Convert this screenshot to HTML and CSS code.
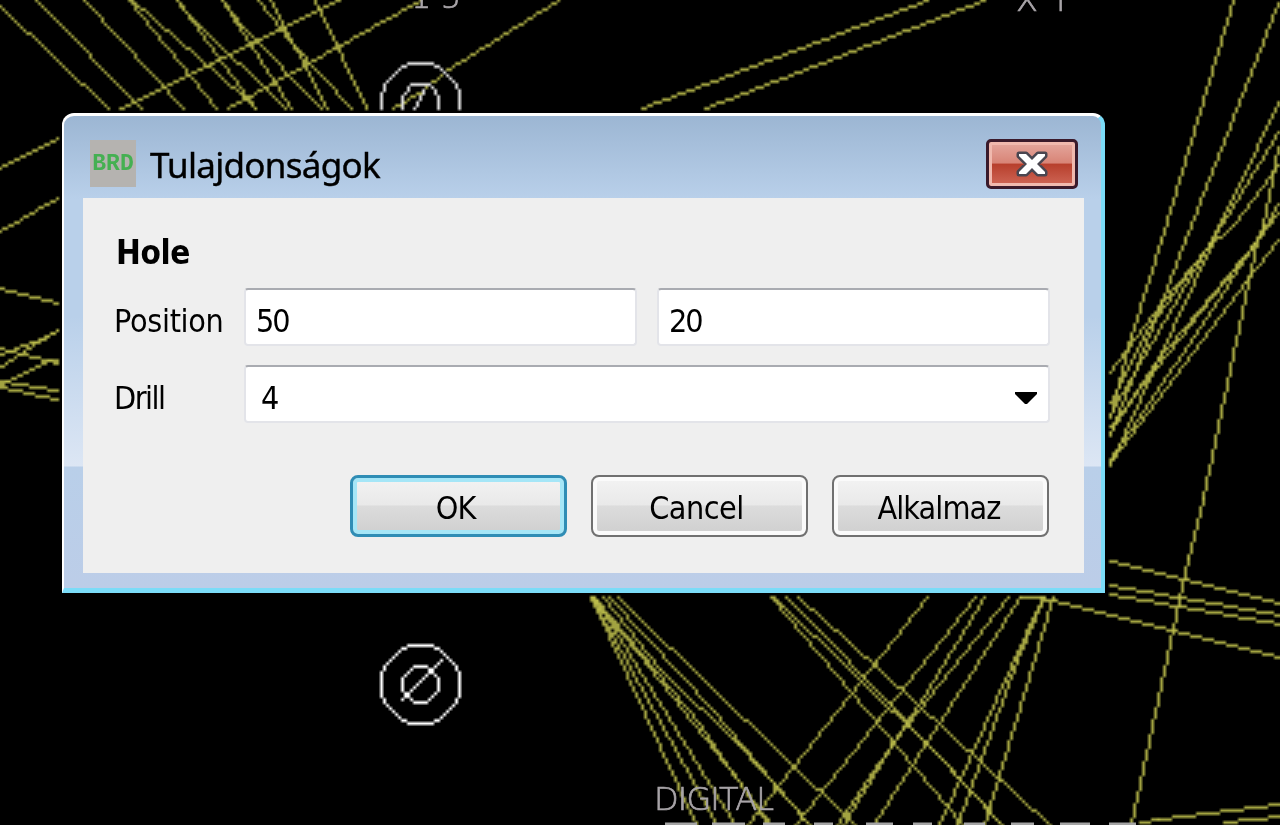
FILE: index.html
```html
<!DOCTYPE html>
<html lang="hu">
<head>
  <meta charset="UTF-8" />
  <meta name="viewport" content="width=device-width, initial-scale=1.0"/>
  <title>Tulajdonságok</title>
  <link rel="stylesheet" href="styles.css">
</head>
<body>
  <!-- board: airwires and holes on the canvas, silk labels above -->
  <canvas class="board" id="board" width="428" height="276"></canvas>
  <svg class="labels" width="1280" height="825" viewBox="0 0 1280 825">
    <path class="pads" d="M665 824H697M712 824H745M763 824H785M814 824H833M866 824H893M913 824H932M964 824H985M1011 824H1034M1060 824H1090M1109 824H1136"/>
    <text class="silk" x="654" y="810" textLength="120">DIGITAL</text>
    <text class="silk" x="411" y="8" textLength="50">15</text>
    <text class="silk" x="1016" y="11">X</text>
    <text class="silk" x="1056" y="11">I</text>
  </svg>

  <form class="dialog">
    <div class="titlebar">
      <span class="app-icon">BRD</span>
      <span class="title">Tulajdonságok</span>
      <button type="button" class="close">
        <svg width="34" height="28" viewBox="0 0 34 28">
          <path class="x-edge" d="M4 4H11L17 10L23 4H30V6L22 14L30 22V24H23L17 18L11 24H4V22L12 14L4 6Z"/>
          <path class="x-fill" d="M4 4H11L17 10L23 4H30V6L22 14L30 22V24H23L17 18L11 24H4V22L12 14L4 6Z"/>
        </svg>
      </button>
    </div>
    <div class="content">
      <h2>Hole</h2>
      <div class="row">
        <span class="label pos">Position</span>
        <span class="field">50</span>
        <span class="field">20</span>
      </div>
      <div class="row">
        <span class="label drill">Drill</span>
        <span class="field combo"><span class="value">4</span>
          <svg width="22" height="13" viewBox="0 0 22 13"><path d="M0 0H22V2L12 12H10L0 2Z"/></svg>
        </span>
      </div>
      <div class="buttons">
        <button type="button" class="btn default">OK</button>
        <button type="button" class="btn">Cancel</button>
        <button type="button" class="btn alk">Alkalmaz</button>
      </div>
    </div>
  </form>

  <script>
    const ctx = document.getElementById('board').getContext('2d');

    // polylines, x y pairs in page pixels
    const wires = [
      // top left
      '0 6 109 109', '38 0 141 109', '86 0 183 109', '131 0 217 109',
      '133 0 245 97 256 109', '177 0 257 109', '177 0 190 16 285 109',
      '222 0 291 109', '222 0 240 25 323 109', '260 0 293 42 353 109',
      '271 0 329 109', '316 0 367 109', '120 109 341 0', '228 109 422 0',
      '395 109 424 91 445 74 558 0', '643 109 928 0', '705 109 985 0',
      // left
      '0 168 58 139', '0 233 58 200', '0 289 58 305', '0 350 58 363',
      '0 356 35 343 58 330', '0 367 8 365 25 351 58 330',
      '0 385 50 362 58 360', '0 382 58 391', '0 389 58 399',
      // right
      '1235 0 1163 240 1133 338 1110 418', '1280 5 1187 240 1161 305 1110 437',
      '1280 103 1233 200 1207 250 1161 303 1110 373',
      '1280 133 1214 240 1150 328 1110 402',
      '1280 165 1233 225 1207 250 1110 415', '1212 243 1155 367 1110 467',
      '1280 206 1258 240 1157 363 1110 434', '1280 214 1258 240 1110 427',
      '1280 241 1245 284 1110 463', '1258 240 1195 336 1110 460',
      '1280 148 1263 225 1258 240 1203 500 1189 560 1132 827',
      // bottom
      '592 598 697 827', '592 598 718 827', '594 598 737 827',
      '592 598 640 655 727 767 772 827', '596 598 700 724 768 827',
      '603 598 660 670 740 745 811 827', '610 598 714 713 757 762 811 827',
      '618 598 635 612 857 827', '771 598 963 827',
      '776 598 934 752 1003 827', '788 598 820 631 936 753 1003 827',
      '800 598 850 643 1050 827', '928 598 749 827', '976 598 797 827',
      '985 598 924 697 838 827', '1009 598 894 743 845 827',
      '1021 598 874 827', '1042 600 940 827', '1045 598 1019 660 958 827',
      '1053 598 985 827',
      // bottom right
      '1022 598 1041 599 1282 658', '1110 562 1282 604',
      '1110 585 1282 617', '1110 594 1282 625',
      '1140 824 1158 821 1282 805', '1225 822 1282 816'
    ];
    const topHole = [
      '381 109 381 96 384 84 402 67 410 64 430 64 438 67 456 84 459 96 459 109',
      '402 109 402 97 413 85 430 85 438 97 438 109', '414 109 424 92'
    ];
    const hole = [
      '411 645 429 645 438 648 456 666 459 675 459 693 456 702 438 720 429 723 411 723 402 720 384 702 381 693 381 675 384 666 402 648 411 645',
      '414 666 426 666 438 678 438 690 426 702 414 702 402 690 402 678 414 666',
      '402 699 441 660'
    ];

    function line(x0, y0, x1, y1) {
      const steps = Math.max(Math.abs(x1 - x0), Math.abs(y1 - y0));
      for (let i = 0; i <= steps; i++) {
        const t = steps ? i / steps : 0;
        ctx.fillRect(Math.round(x0 + (x1 - x0) * t), Math.round(y0 + (y1 - y0) * t), 1, 1);
      }
    }

    function draw(list, color) {
      ctx.fillStyle = color;
      list.forEach(item => {
        const p = item.split(' ').map(n => Math.floor(n / 3));
        for (let i = 0; i + 3 < p.length; i += 2) {
          line(p[i], p[i + 1], p[i + 2], p[i + 3]);
        }
      });
    }

    draw(wires, 'rgba(190, 192, 76, 0.85)');
    draw(topHole, '#dcdcdc');
    draw(hole, '#fff');
    draw(hole, '#fff');
  </script>
</body>
</html>
```

FILE: styles.css
```css
* {
  box-sizing: border-box;
}
body {
  margin: 0;
  width: 1280px;
  height: 825px;
  overflow: hidden;
  background: #000;
  padding: 113px 0 0 62px;
  font-family: "DejaVu Sans Condensed", "DejaVu Sans", sans-serif;
  font-stretch: condensed;
  font-size: 32px;
  color: #000;
}
.board, .labels {
  position: absolute;
  left: 0;
  top: 0;
}
.board {
  left: -1px;
  top: -1px;
  width: 1284px;
  height: 828px;
}
.pads {
  stroke: #a5a5a5;
  stroke-width: 3;
}
.silk {
  font-family: "DejaVu Sans Light", "DejaVu Sans", sans-serif;
  font-weight: 200;
  font-stretch: normal;
  font-size: 32px;
  fill: #a8a4a8;
  stroke: #a8a4a8;
  stroke-width: 0.7;
}
.dialog {
  position: relative;
  width: 1043px;
  height: 480px;
  padding: 0 18px 0 19px;
  border: 2px solid #fff;
  border-top-width: 3px;
  border-right: 4px solid #7bdcf8;
  border-bottom: 5px solid #7bdcf8;
  border-radius: 12px 12px 0 0;
  background: linear-gradient(#9cb6d3 0, #b9d0ea 83px, #b9d0ea 200px, #dce6f4 350px, #b9cfe9 351px, #bccde8 100%);
}
.titlebar {
  height: 82px;
  display: flex;
  align-items: flex-start;
  padding: 23px 5px 0 7px;
}
.app-icon {
  width: 46px;
  height: 47px;
  margin-top: 1px;
  background: #b5b3b0;
  color: #45b052;
  font: bold 23px/49px "Liberation Mono", monospace;
  text-align: center;
}
.title {
  margin-left: 14px;
  font-family: "Noto Sans", "Open Sans", sans-serif;
  font-stretch: normal;
  font-size: 35px;
  line-height: 52px;
  letter-spacing: -0.7px;
  -webkit-text-stroke: 0.4px #000;
}
.close {
  width: 92px;
  height: 50px;
  margin-left: auto;
  padding: 0;
  display: flex;
  align-items: center;
  justify-content: center;
  border: 3px solid #3a1a2b;
  border-radius: 5px;
  background: linear-gradient(#e5a89f, #d88476 48%, #b73f2c 50%, #cf6757);
  box-shadow: inset 0 0 0 3px #f0b9ae;
}
.close path {
  stroke-linejoin: round;
}
.close .x-edge {
  fill: #4a4650;
  stroke: #4a4650;
  stroke-width: 5;
}
.close .x-fill {
  fill: #fff;
}
.content {
  width: 1001px;
  height: 375px;
  padding: 33px 34px 0 31px;
  background: #efefef;
}
h2 {
  margin: 0 0 14px 2px;
  font-size: 33px;
  line-height: 43px;
  letter-spacing: -0.4px;
}
.row {
  display: flex;
  gap: 20px;
  height: 58px;
  margin-bottom: 19px;
}
.label {
  width: 110px;
  line-height: 66px;
  white-space: nowrap;
}
.field {
  flex: 1;
  padding-left: 10px;
  line-height: 62px;
  letter-spacing: -2px;
  background: #fff;
  border: 2px solid #e3e4e9;
  border-top-color: #a9abb1;
  border-radius: 4px;
}
.pos {
  letter-spacing: -0.3px;
}
.drill {
  letter-spacing: -1.5px;
}
.combo {
  display: flex;
  align-items: center;
  justify-content: space-between;
  padding: 0 11px 0 15px;
}
.value {
  padding-top: 8px;
}
.combo svg {
  margin-top: 8px;
}
.buttons {
  display: flex;
  justify-content: flex-end;
  gap: 24px;
  margin: 52px 1px 0 0;
}
.btn {
  width: 217px;
  height: 62px;
  padding: 3px 6px 0 0;
  font: inherit;
  color: #000;
  letter-spacing: -0.5px;
  border: 2px solid #707070;
  border-radius: 8px;
  background: linear-gradient(#f3f3f3, #e9e9e9 48%, #dcdcdc 50%, #cfcfcf);
  box-shadow: inset 0 0 0 4px #fafafa;
}
.alk {
  padding-right: 3px;
  letter-spacing: -0.9px;
}
.default {
  letter-spacing: -1px;
  border: 3px solid #2f8db5;
  box-shadow: inset 0 0 0 4px #a5e6f7;
}
```
